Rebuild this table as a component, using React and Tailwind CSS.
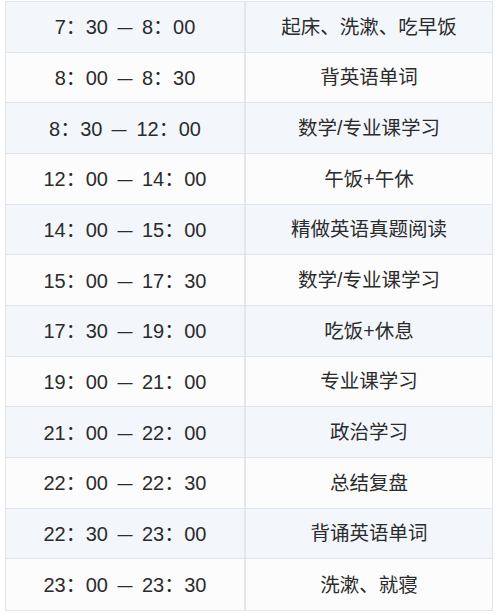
import React from "react";

const rows = [
  ["7：30", "8：00", "起床、洗漱、吃早饭"],
  ["8：00", "8：30", "背英语单词"],
  ["8：30", "12：00", "数学/专业课学习"],
  ["12：00", "14：00", "午饭+午休"],
  ["14：00", "15：00", "精做英语真题阅读"],
  ["15：00", "17：30", "数学/专业课学习"],
  ["17：30", "19：00", "吃饭+休息"],
  ["19：00", "21：00", "专业课学习"],
  ["21：00", "22：00", "政治学习"],
  ["22：00", "22：30", "总结复盘"],
  ["22：30", "23：00", "背诵英语单词"],
  ["23：00", "23：30", "洗漱、就寝"],
];

const App = () => {
  return (
    <div className="w-[500px] h-[614px] bg-white pt-px pl-[5px] overflow-hidden">
      <div
        className="w-[488px] h-[610px] grid grid-rows-12 border border-[#e1e4e8] text-[#2b2b2b]"
        style={{ fontFamily: '"Liberation Sans", "Noto Sans CJK SC", sans-serif' }}
      >
        {rows.map(([start, end, task], i) => (
          <div
            key={i}
            className={`grid grid-cols-[240px_1fr] ${i % 2 === 0 ? "bg-[#f3f7fc]" : "bg-[#fcfcfc]"} ${i < rows.length - 1 ? "border-b border-[#e1e4e8]" : ""}`}
          >
            <div className="flex items-center justify-center border-r-2 border-[#e4e6ea] text-[20px] pt-px">
              <span>{start}</span>
              <span className="inline-block w-[34px] text-center">
                <span className="inline-block scale-x-75">—</span>
              </span>
              <span>{end}</span>
            </div>
            <div className="flex items-center justify-center text-[19.5px] pt-px">{task}</div>
          </div>
        ))}
      </div>
    </div>
  );
};

export default App;
